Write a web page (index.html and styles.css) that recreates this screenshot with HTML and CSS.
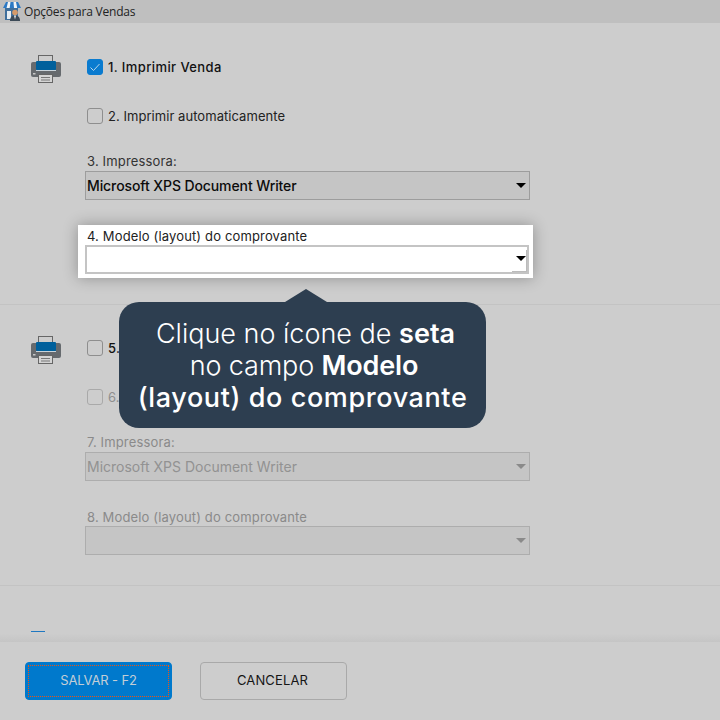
FILE: index.html
```html
<!DOCTYPE html>
<html lang="pt">
<head>
<meta charset="utf-8">
<title>Opções para Vendas</title>
<link rel="stylesheet" href="styles.css">
</head>
<body>
<div class="window">
  <header class="titlebar">
    <svg class="store" viewBox="0 0 18 19" width="18" height="19">
      <rect x="2" y="6" width="13" height="12" fill="#3f6f9c"/>
      <rect x="4" y="9" width="4" height="8" fill="#e8eef3"/>
      <path d="M3 0h12l3 6H0z" fill="#2c79c4"/>
      <path d="M5 0h2.500l-.8 6H3.500zM10.500 0H13l1.200 6h-3.200z" fill="#f1f4f7"/>
      <circle cx="12" cy="10.500" r="2.800" fill="#d49a6a"/>
      <path d="M7 19c0-4 2-5.500 5-5.500s5 1.500 5 5.500z" fill="#3c4a57"/>
      <path d="M11 13.500h2l-1 4z" fill="#f1f4f7"/>
    </svg>
    <span>Opções para Vendas</span>
  </header>

  <section class="section">
    <svg class="printer" viewBox="0 0 30 28" width="30" height="28">
      <rect x="7.500" y=".5" width="14" height="8" fill="none" stroke="#666" stroke-width="1"/>
      <rect y="7" width="30" height="15" rx="2" fill="#666a6e"/>
      <rect x="5" y="6" width="20" height="9" rx="1" fill="#00609c"/>
      <path d="M5 15.500h20" stroke="#c9d3da"/>
      <rect x="2" y="18" width="2.500" height="1.500" fill="#c8c8c8"/>
      <rect x="7.500" y="19.500" width="14" height="8" fill="#d4d4d4" stroke="#666"/>
      <path d="M10 22.500h9M10 25h9" stroke="#777"/>
    </svg>
    <div class="form">
      <label class="check"><span class="box on"><svg viewBox="0 0 16 16" width="16" height="16"><path d="M3.500 8.500l3 3 6-6.500" fill="none" stroke="#b9d6ea" stroke-width="1"/></svg></span><span class="strong">1. Imprimir Venda</span></label>
      <label class="check second"><span class="box"></span><span>2. Imprimir automaticamente</span></label>
      <div class="field-label gap-a">3. Impressora:</div>
      <div class="select"><span>Microsoft XPS Document Writer</span><i class="arrow"></i></div>
      <div class="highlight">
        <div class="field-label">4. Modelo (layout) do comprovante</div>
        <div class="select white"><i class="arrow"></i><b class="btn-edge"></b></div>
      </div>
    </div>
  </section>

  <section class="section two">
    <svg class="printer" viewBox="0 0 30 28" width="30" height="28">
      <rect x="7.500" y=".5" width="14" height="8" fill="none" stroke="#666" stroke-width="1"/>
      <rect y="7" width="30" height="15" rx="2" fill="#666a6e"/>
      <rect x="5" y="6" width="20" height="9" rx="1" fill="#00609c"/>
      <path d="M5 15.500h20" stroke="#c9d3da"/>
      <rect x="2" y="18" width="2.500" height="1.500" fill="#c8c8c8"/>
      <rect x="7.500" y="19.500" width="14" height="8" fill="#d4d4d4" stroke="#666"/>
      <path d="M10 22.500h9M10 25h9" stroke="#777"/>
    </svg>
    <div class="form">
      <label class="check"><span class="box"></span><span class="strong">5. Imprimir Venda</span></label>
      <label class="check second off"><span class="box"></span><span>6. Imprimir automaticamente</span></label>
      <div class="field-label gap-a off">7. Impressora:</div>
      <div class="select disabled"><span>Microsoft XPS Document Writer</span><i class="arrow"></i></div>
      <div class="field-label gap-b off">8. Modelo (layout) do comprovante</div>
      <div class="select disabled short"><i class="arrow"></i></div>
    </div>
  </section>

  <section class="rest"><i class="peek"></i></section>

  <footer class="footer">
    <button class="btn primary"><span>SALVAR - F2</span></button>
    <button class="btn">CANCELAR</button>
  </footer>

  <div class="tip">
    <i class="tip-arrow"></i>
    <span class="line l1">Clique no ícone de <b>seta</b></span>
    <span class="line l2">no campo <b>Modelo</b></span>
    <span class="line l3">(layout) do comprovante</span>
  </div>
</div>
</body>
</html>
```

FILE: styles.css
```css
* { box-sizing: border-box; }
html, body { margin: 0; padding: 0; }
body { font-family: Inter, "Liberation Sans", sans-serif; background: #cdcdcd; color: #111; }
.window { position: relative; width: 720px; height: 720px; overflow: hidden; display: flex; flex-direction: column; background: #cdcdcd; }

.titlebar { flex: 0 0 23px; display: flex; align-items: center; background: #bfbfbf; font-family: "Open Sans", sans-serif; font-size: 12px; letter-spacing: -.2px; color: #222; padding-left: 3px; gap: 3px; }
.store { display: block; }

.section { flex: 0 0 282px; display: flex; padding-left: 31px; border-bottom: 1px solid #c3c3c3; }
.two { flex-basis: 281px; }
.printer { display: block; margin-top: 32px; flex: none; }
.two .printer { margin-top: 31px; }
.form { margin-left: 24px; width: 445px; padding-top: 36px; font-size: 13px; }
.two .form { padding-top: 35px; }

.check { display: flex; align-items: center; height: 16px; margin-left: 2px; gap: 5px; color: #222; letter-spacing: .05px; }
.second { margin-top: 33px; }
.strong { font-weight: 500; color: #111; letter-spacing: .4px; }
.box { width: 16px; height: 16px; flex: none; border: 1px solid #8e8e8e; border-radius: 3px; }
.box.on { background: #0a7bcf; border-color: #0a7bcf; }
.box svg { display: block; margin: -1px; }
.check.off { color: #8f8f8f; }
.off .box { border-color: #a9a9a9; }

.field-label { height: 16px; line-height: 16px; padding-left: 2px; color: #333; letter-spacing: .15px; }
.field-label.off { color: #8a8a8a; }
.gap-a { margin-top: 29px; }
.gap-b { margin-top: 28px; }

.select { position: relative; display: flex; align-items: center; height: 29px; margin-top: 2px; padding: 0 0 1px 1px; border: 1px solid #9d9d9d; background: #c5c5c5; font-size: 14px; font-weight: 500; letter-spacing: -.1px; color: #0c0c0c; }
.select .arrow { position: absolute; right: 3px; top: 11px; width: 0; height: 0; border-left: 5px solid transparent; border-right: 5px solid transparent; border-top: 5px solid #000; }

.disabled { border-color: #adadad; color: #929292; font-weight: 400; letter-spacing: 0; background: #c5c5c5; }
.disabled .arrow { border-top-color: #8a8a8a; }
.short { margin-top: 1px; }

.highlight { position: relative; margin: 25px -3px 0 -7px; padding: 3px 4px 4px 7px; height: 53px; background: #fff; box-shadow: 0 0 14px rgba(0, 0, 0, .3); }
.highlight .field-label { color: #222; }
.white { height: 29px; margin-top: 1px; border: 2px solid #c4c4c4; background: #fff; }
.white .arrow { top: 9px; right: 1px; }
.btn-edge { position: absolute; right: 0; bottom: 0; width: 15px; height: 22px; border-right: 1px solid #bbb; border-bottom: 1px solid #bbb; }

.rest { flex: 1; position: relative; background: linear-gradient(#cdcdcd 85%, #c5c5c5); }
.peek { position: absolute; left: 31px; top: 45px; width: 14px; height: 1px; background: #1f78c1; }

.footer { flex: 0 0 78px; display: flex; gap: 28px; padding: 20px 0 0 25px; background: #cdcdcd; }
.btn { width: 147px; height: 38px; padding: 0 2px 2px 0; border: 1px solid #a9a9a9; border-radius: 4px; background: #cdcdcd; font: 400 13px Inter, "Liberation Sans", sans-serif; letter-spacing: .15px; color: #151515; }
.primary { background: #0079cc; border-color: #0079cc; color: #c3ced6; padding: 2px; letter-spacing: -.15px; }
.primary span { display: flex; align-items: center; justify-content: center; height: 100%; padding-bottom: 2px; border: 1px dotted #f0550f; }

.tip { position: absolute; left: 119px; top: 302px; width: 367px; height: 126px; padding-top: 16px; border-radius: 20px; background: #2d3e50; color: #fff; text-align: center; font-size: 27px; line-height: 32px; font-weight: 300; }
.tip b { font-weight: 600; }
.line { display: block; }
.l1 { padding-left: 6px; }
.l2 { padding-left: 3px; letter-spacing: -.15px; }
.l3 { font-weight: 500; letter-spacing: .6px; }
.tip-arrow { position: absolute; left: 166px; top: -13px; width: 0; height: 0; border-left: 21px solid transparent; border-right: 21px solid transparent; border-bottom: 13px solid #2d3e50; }
```
